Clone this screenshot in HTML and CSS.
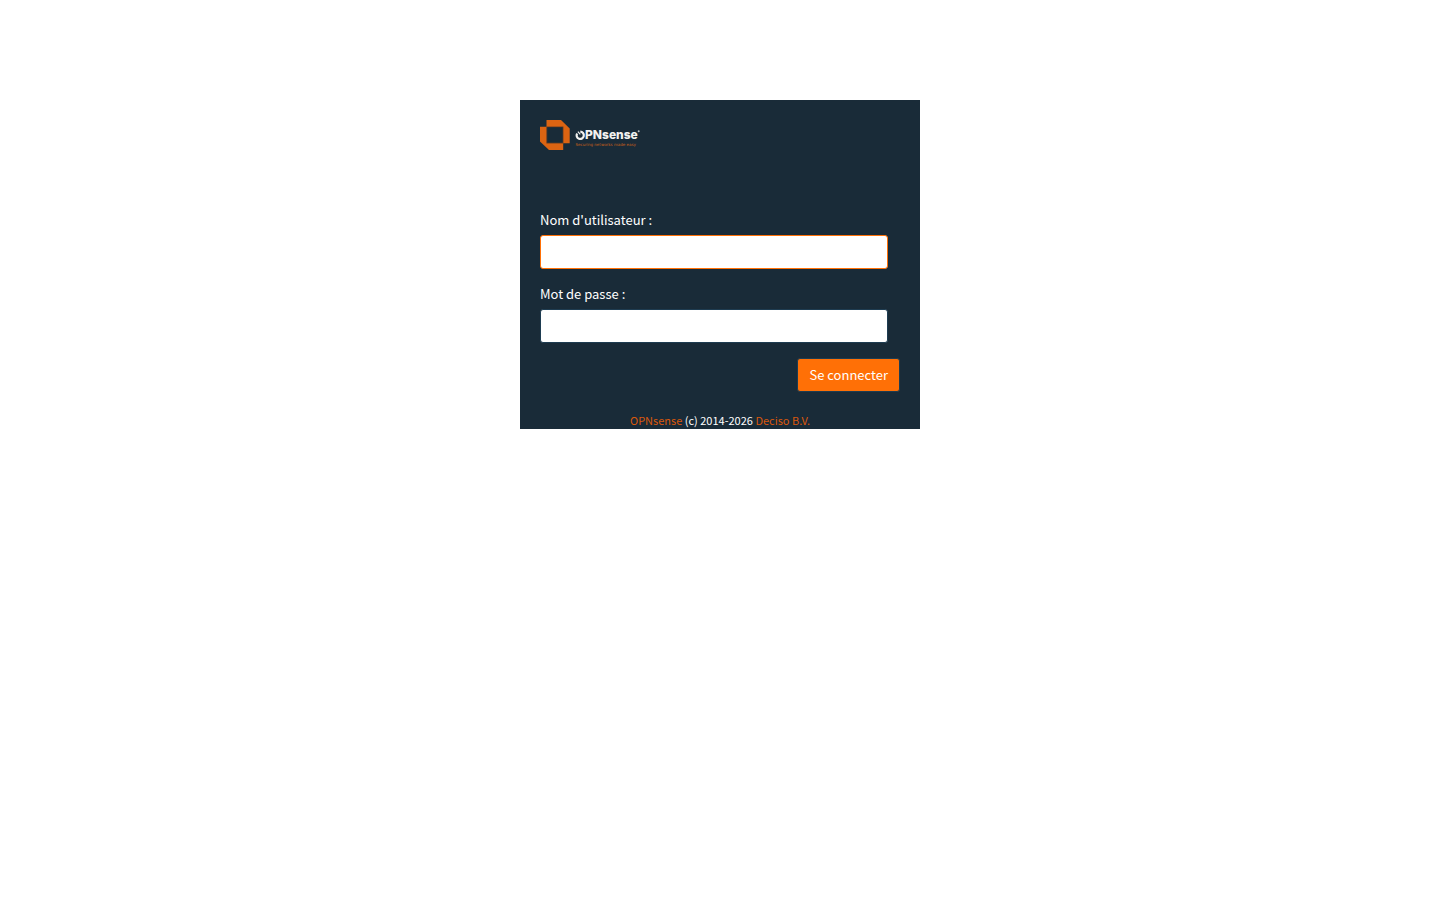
FILE: index.html
```html
<!DOCTYPE html>
<html lang="fr">
<head>
<meta charset="utf-8">
<title>Connexion | OPNsense</title>
<link rel="stylesheet" href="styles.css">
</head>
<body>
<main class="login">
  <header class="login-head">
    <svg class="logo" viewBox="0 0 100 30" role="img" aria-label="OPNsense">
      <path class="logo-mark" d="M6.500 0H21L29.700 8.500V23.200H23.200V6.700H6.500ZM0 6.700H6.500V23.200H23.200V29.900H9L0 21.500Z"/>
      <path class="logo-line" d="M6.700 6.700H23.200V23.200H6.700Z"/>
      <path class="logo-ring" d="M37.100 13.500A3.600 3.600 0 1 0 40.300 11.700"/>
      <path class="logo-hand" d="M37.900 11.600L40.300 14.400"/>
      <text class="logo-name" x="45" y="19">PNsense</text>
      <circle class="logo-dot" cx="98.700" cy="11.300" r="1"/>
      <text class="logo-tag" x="35.500" y="26">Securing networks made easy</text>
    </svg>
  </header>
  <form class="login-form">
    <div class="field">
      <label for="user">Nom d'utilisateur :</label>
      <input id="user" class="text-box text-box-active" type="text" autocomplete="off">
    </div>
    <div class="field">
      <label for="password">Mot de passe :</label>
      <input id="password" class="text-box" type="password" autocomplete="off">
    </div>
    <button class="submit" type="submit">Se connecter</button>
  </form>
  <footer class="login-foot"><a href="#">OPNsense</a> (c) 2014-2026 <a href="#">Deciso B.V.</a></footer>
</main>
</body>
</html>
```
FILE: styles.css
```css
* { box-sizing: border-box; }
body {
  margin: 0;
  background: #fff;
  color: #fff;
  font: 400 13px/20px "Noto Sans CJK SC", sans-serif;
}
.login {
  width: 100%;
  max-width: 400px;
  margin: 100px auto 0;
  background: #192b38;
}
.login-head { padding: 20px 20px 60px; }
.logo { display: block; width: 100px; height: 30px; }
.logo-mark { fill: #dc6412; }
.logo-line { fill: none; stroke: #a04e17; stroke-width: 0.6; }
.logo-ring { fill: none; stroke: #f2f2f0; stroke-width: 2.2; }
.logo-hand { fill: none; stroke: #f2f2f0; stroke-width: 1.2; }
.logo-name { fill: #f2f2f0; font: 800 12px Inter, sans-serif; }
.logo-dot { fill: #b8bfc4; }
.logo-tag { fill: #c86018; font: 400 4px "DejaVu Sans", sans-serif; }
.login-form {
  display: flex;
  flex-direction: column;
  gap: 15px;
  padding: 0 20px;
}
.field { display: flex; flex-direction: column; gap: 5px; }
.text-box {
  width: calc(100% - 12px);
  height: 34px;
  padding: 6px 12px;
  border: 1px solid #1e3c51;
  border-radius: 3px;
  background: #fff;
  color: #333;
  font: inherit;
  outline: none;
}
.text-box-active { border-color: #ff7006; }
.submit {
  align-self: flex-end;
  height: 34px;
  padding: 0 11px;
  border: 1px solid #1e3c51;
  border-radius: 3px;
  background: #ff7006;
  color: #fff;
  font: inherit;
}
.login-foot {
  padding-top: 20px;
  font-size: 11px;
  line-height: 17px;
  text-align: center;
}
.login-foot a { color: #d9580c; text-decoration: none; }
```
